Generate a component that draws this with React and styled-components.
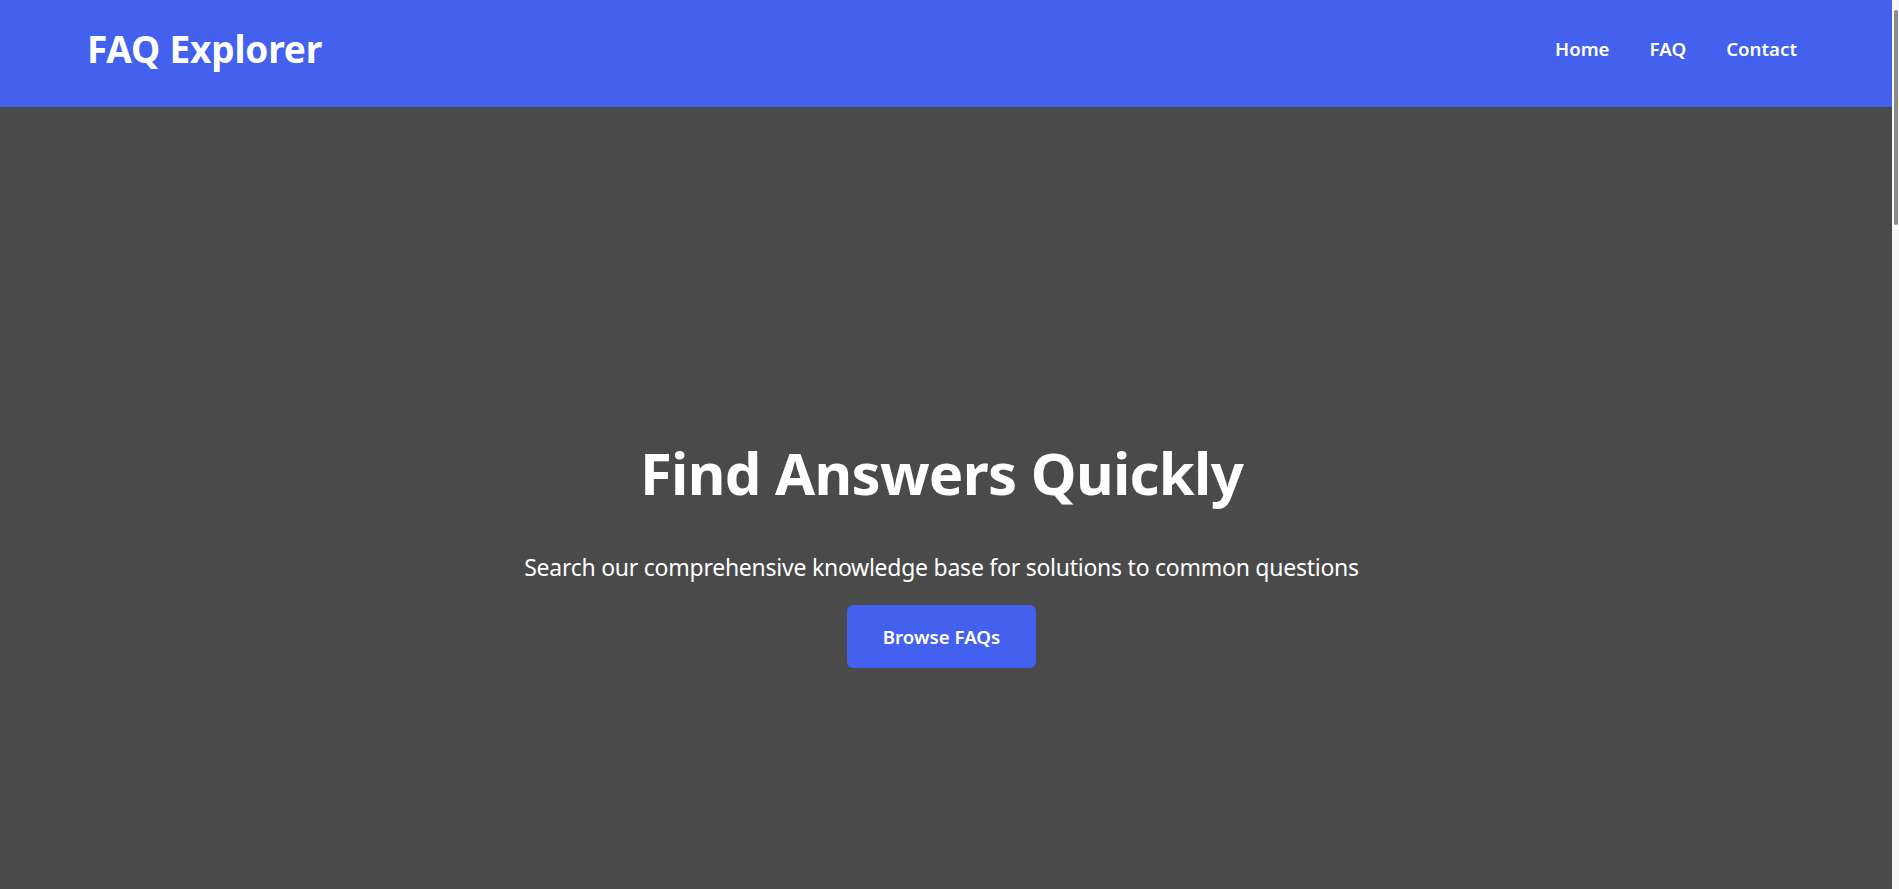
import React from "react";
import styled, { createGlobalStyle } from "styled-components";

const GlobalStyle = createGlobalStyle`
  html, body {
    margin: 0;
    padding: 0;
    height: 100%;
    overflow: hidden;
  }
  body {
    font-family: "Noto Sans", "Open Sans", sans-serif;
    background: #4a4a4a;
  }
`;

const Shell = styled.div`
  display: flex;
  height: 100vh;
`;

const Page = styled.div`
  flex: 1;
  min-width: 0;
  overflow: hidden;
  background: #4a4a4a;
`;

// fake browser scrollbar on the right edge
const ScrollTrack = styled.div`
  width: 7px;
  background: #f9f9f9;
  display: flex;
  flex-direction: column;
  align-items: center;
  padding-top: 10px;
`;

const ScrollThumb = styled.div`
  width: 4px;
  height: 215px;
  border-radius: 3px;
  background: #8b8b8b;
`;

const Header = styled.header`
  height: 107px;
  background: #4361ee;
  display: flex;
  align-items: center;
  justify-content: space-between;
  padding: 0 95px 0 87px;
  box-sizing: border-box;
`;

const Logo = styled.h1`
  margin: 0 0 11px;
  font-size: 37px;
  font-weight: 700;
  color: #fff;
  letter-spacing: -0.2px;
`;

const Nav = styled.nav`
  display: flex;
  gap: 40px;
  margin: 0 0 10px 0;
`;

const NavLink = styled.a`
  color: #fff;
  font-size: 18.7px;
  font-weight: 600;
  text-decoration: none;
`;

const Hero = styled.section`
  height: 100vh;
  box-sizing: border-box;
  padding: 2px 9px 0 0;
  display: flex;
  flex-direction: column;
  align-items: center;
  justify-content: center;
  text-align: center;
  color: #fff;
`;

const Title = styled.h2`
  margin: 0;
  font-size: 58px;
  font-weight: 700;
  line-height: 72px;
  letter-spacing: -0.7px;
`;

const Subtitle = styled.p`
  margin: 43px 0 22px;
  font-size: 23px;
  font-weight: 400;
  line-height: 31px;
  letter-spacing: -0.25px;
`;

const CtaButton = styled.button`
  width: 189px;
  height: 63px;
  padding: 0;
  border: none;
  border-radius: 6px;
  background: #4361ee;
  color: #fff;
  font-family: inherit;
  font-size: 18.7px;
  font-weight: 600;
  cursor: pointer;
`;

export default function App() {
  return (
    <>
      <GlobalStyle />
      <Shell>
        <Page>
          <Header>
            <Logo>FAQ Explorer</Logo>
            <Nav>
              <NavLink href="#">Home</NavLink>
              <NavLink href="#">FAQ</NavLink>
              <NavLink href="#">Contact</NavLink>
            </Nav>
          </Header>
          <Hero>
            <Title>Find Answers Quickly</Title>
            <Subtitle>
              Search our comprehensive knowledge base for solutions to common questions
            </Subtitle>
            <CtaButton>Browse FAQs</CtaButton>
          </Hero>
        </Page>
        <ScrollTrack>
          <ScrollThumb />
        </ScrollTrack>
      </Shell>
    </>
  );
}
